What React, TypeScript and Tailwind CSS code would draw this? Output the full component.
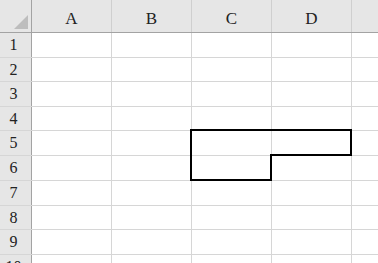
import React from "react";

const cols = ["A", "B", "C", "D", ""];
const rowHeights = [25, 24, 25, 24, 25, 25, 25, 24, 25, 25];

export default function App() {
  return (
    <div
      className="relative w-[378px] h-[263px] overflow-hidden bg-white"
      style={{ fontFamily: '"Liberation Serif", "DejaVu Serif", serif' }}
    >
      {/* header row */}
      <div className="flex h-[33px] bg-[#e6e6e6] border-b border-[#a3a3a3]">
        <div className="relative w-[32px] shrink-0 border-r border-[#a3a3a3]">
          <svg className="absolute left-0 top-0" width="31" height="32">
            <polygon points="28,15 28,29 14,29" fill="#bdbdbd" />
          </svg>
        </div>
        {cols.map((c, i) => (
          <div
            key={i}
            className={`w-[80px] shrink-0 flex items-end justify-center pb-[2px] text-[17px] leading-[22px] text-[#222] ${
              i < 4 ? "border-r border-[#cfcfcf]" : ""
            }`}
          >
            {c}
          </div>
        ))}
      </div>
      {rowHeights.map((h, r) => (
        <div key={r} className="flex border-b border-[#d6d6d6]" style={{ height: h }}>
          <div className="w-[32px] shrink-0 bg-[#e6e6e6] border-r border-[#a3a3a3] flex items-center justify-center pr-[4px] text-[16px] text-[#222]">
            {r + 1}
          </div>
          {cols.map((_, i) => (
            <div
              key={i}
              className={`w-[80px] shrink-0 ${i < 4 ? "border-r border-[#d6d6d6]" : ""}`}
            />
          ))}
        </div>
      ))}
      <svg className="absolute left-0 top-0 pointer-events-none" width="378" height="263">
        <polygon
          points="191,130 351,130 351,155 271,155 271,180 191,180"
          fill="none"
          stroke="#000"
          strokeWidth="2"
        />
      </svg>
    </div>
  );
}
